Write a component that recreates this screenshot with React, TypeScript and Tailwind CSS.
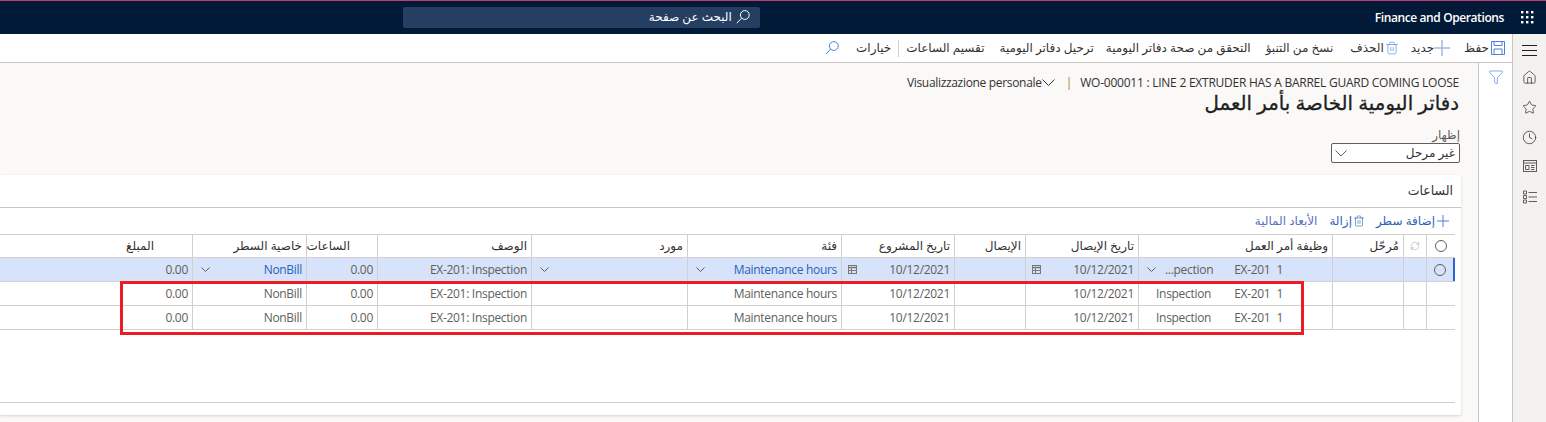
import React from 'react';
import { Home, Star, Clock, Trash2, Filter, RefreshCw } from 'lucide-react';

const columns = [
  { label: '', width: 'w-[29px]' },
  { label: '', width: 'w-[23px]' },
  { label: 'مُرحّل', width: 'w-[71px]' },
  { label: 'وظيفة أمر العمل', width: 'w-[194px]' },
  { label: 'تاريخ الإيصال', width: 'w-[113px]' },
  { label: 'الإيصال', width: 'w-[71px]' },
  { label: 'تاريخ المشروع', width: 'w-[113px]' },
  { label: 'فئة', width: 'w-[154px]' },
  { label: 'مورد', width: 'w-[156px]' },
  { label: 'الوصف', width: 'w-[154px]' },
  { label: 'الساعات', width: 'w-[71px]', pad: 'pr-[27px]' },
  { label: 'خاصية السطر', width: 'w-[114px]' },
  { label: 'المبلغ', width: 'w-[192px]', pad: 'pr-[38px]' },
];

const Cell: React.FC<{ width: string; children?: React.ReactNode; className?: string }> = ({ width, children, className = '' }) => (
  <div className={`${width} shrink-0 h-full border-l border-[#d2d0ce] flex items-center px-[4px] ${className}`}>{children}</div>
);

const Ltr: React.FC<{ children: React.ReactNode; className?: string }> = ({ children, className = '' }) => (
  <span dir="ltr" className={`tracking-[-0.3px] ${className}`}>{children}</span>
);

const Chev: React.FC<{ w: number; color?: string; className?: string }> = ({ w, color = '#605e5c', className = '' }) => (
  <svg width={w} height={w / 2 + 1} viewBox={`0 0 ${w} ${w / 2 + 1}`} fill="none" stroke={color} className={`shrink-0 ${className}`}>
    <path d={`M0.5 0.5L${w / 2} ${w / 2}L${w - 0.5} 0.5`} />
  </svg>
);

const Chevron = () => <Chev w={9} className="mr-auto ml-[4px]" />;

const DateIcon = () => (
  <svg width="9" height="9" viewBox="0 0 9 9" fill="none" stroke="#7a7876" className="mr-auto ml-[2px]">
    <rect x="0.5" y="0.5" width="8" height="8" />
    <path d="M0.5 2.5h8" strokeWidth="1.5" />
    <path d="M3.5 3v5M0.5 5.5h8" />
  </svg>
);

const Row: React.FC<{ selected?: boolean }> = ({ selected }) => {
  const link = selected ? 'text-[#2b5fb8]' : '';
  return (
    <div className={`flex h-[24px] border-b border-[#d2d0ce] text-[#605e5c] ${selected ? 'bg-[#d6e3fa]' : ''}`}>
      <Cell width="w-[29px]" className={`justify-center ${selected ? 'border-r-2 border-r-[#2b66d9]' : ''}`}>
        {selected && <span className="w-[12px] h-[12px] rounded-full border border-[#605e5c]" />}
      </Cell>
      <Cell width="w-[23px]" />
      <Cell width="w-[71px]" />
      <Cell width="w-[194px]" className="pr-[49px]">
        <Ltr>1</Ltr>
        <Ltr className="mr-[6px]">EX-201</Ltr>
        <Ltr className={selected ? 'mr-[21px]' : 'mr-[23px]'}>{selected ? '...pection' : 'Inspection'}</Ltr>
        {selected && <Chevron />}
      </Cell>
      <Cell width="w-[113px]">
        <Ltr>10/12/2021</Ltr>
        {selected && <DateIcon />}
      </Cell>
      <Cell width="w-[71px]" />
      <Cell width="w-[113px]">
        <Ltr>10/12/2021</Ltr>
        {selected && <DateIcon />}
      </Cell>
      <Cell width="w-[154px]">
        <Ltr className={link}>Maintenance hours</Ltr>
        {selected && <Chevron />}
      </Cell>
      <Cell width="w-[156px]">{selected && <Chevron />}</Cell>
      <Cell width="w-[154px]">
        <Ltr>EX-201: Inspection</Ltr>
      </Cell>
      <Cell width="w-[71px]">
        <Ltr>0.00</Ltr>
      </Cell>
      <Cell width="w-[114px]">
        <Ltr className={link}>NonBill</Ltr>
        {selected && <Chevron />}
      </Cell>
      <Cell width="w-[192px]" className="border-l-0">
        <Ltr>0.00</Ltr>
      </Cell>
    </div>
  );
};

const AppGrid = () => (
  <svg width="15" height="15" viewBox="0 0 15 15" fill="#fff">
    {[1, 6, 11].map((y) => [1, 6, 11].map((x) => <rect key={`${x}-${y}`} x={x} y={y} width="2.4" height="2.4" />))}
  </svg>
);

const SearchGlyph: React.FC<{ color: string; className?: string }> = ({ color, className = '' }) => (
  <svg width="14" height="14" viewBox="0 0 14 14" fill="none" stroke={color} className={`shrink-0 ${className}`}>
    <circle cx="8.8" cy="5" r="4.4" />
    <path d="M5.6 8.2L0.8 13.2" />
  </svg>
);

const MenuGlyph = () => (
  <svg width="15" height="11" viewBox="0 0 15 11" stroke="#201f1e">
    <path d="M0 0.5h15M0 5.5h15M0 10.5h15" />
  </svg>
);

const FormIcon = () => (
  <svg width="14" height="13" viewBox="0 0 14 13" fill="none" stroke="#605e5c">
    <rect x="0.5" y="0.5" width="13" height="11" />
    <path d="M0.5 3h13M2.5 5.5h3.5v4H2.5zM8 5.5h3.5M8 7.5h3.5M8 9.5h3.5" />
  </svg>
);

const ListIcon = () => (
  <svg width="14" height="14" viewBox="0 0 14 14" fill="none" stroke="#605e5c">
    <path d="M0.5 1h3v3h-3zM0.5 5.5h3v3h-3zM0.5 10h3v3h-3z" />
    <path d="M5.5 2.5h8.5M5.5 7h8.5M5.5 11.5h8.5" />
  </svg>
);

const SaveIcon = () => (
  <svg width="14" height="14" viewBox="0 0 14 14" fill="none" stroke="#4f7fe0">
    <path d="M0.5 0.5h13v13h-13z" />
    <path d="M3 0.5v4h8v-4M3 13.5v-5.5h8v5.5" />
  </svg>
);

const PlusIcon: React.FC<{ size: number; color: string; weight?: number }> = ({ size, color, weight = 1 }) => (
  <svg width={size} height={size} viewBox={`0 0 ${size} ${size}`} stroke={color} strokeWidth={weight} className="shrink-0">
    <path d={`M${size / 2} 0v${size}M0 ${size / 2}h${size}`} />
  </svg>
);

const ToolText: React.FC<{ children: React.ReactNode; className?: string }> = ({ children, className = '' }) => (
  <span className={`text-[12px] text-[#323130] whitespace-nowrap ${className}`}>{children}</span>
);

export default function App() {
  return (
    <div dir="rtl" className="h-screen w-full overflow-hidden flex flex-col bg-[#faf9f8] font-['Open_Sans','DejaVu_Sans',sans-serif] text-[12px] text-[#323130]">
      <header className="h-[34px] shrink-0 bg-[#001a38] border-t border-[#c23b72] flex items-center pr-[11px] text-white">
        <AppGrid />
        <span dir="ltr" className="mr-[16px] text-[12px] font-semibold tracking-[-0.4px] whitespace-nowrap">Finance and Operations</span>
        <div className="mr-[615px] w-[357px] h-[21px] mt-[-1px] rounded-[2px] bg-[#253f63] flex items-center pr-[10px] gap-[4px]">
          <SearchGlyph color="#ffffff" />
          <span className="text-[12px] text-white">البحث عن صفحة</span>
        </div>
      </header>

      <div className="flex flex-1 min-h-0">
        <nav className="w-[34px] shrink-0 bg-[#f3f2f1] border-l border-[#c8c6c4] flex flex-col items-center pt-[11px] gap-[15px] text-[#323130]">
          <div className="h-[13px]">
            <MenuGlyph />
          </div>
          <Home size={15} strokeWidth={1.2} className="mt-[-3px]" />
          <Star size={15} strokeWidth={1.2} />
          <Clock size={15} strokeWidth={1.2} />
          <FormIcon />
          <div className="mt-[2px]">
            <ListIcon />
          </div>
        </nav>

        <div className="flex-1 min-w-0 flex flex-col">
          <div className="h-[29px] shrink-0 bg-white border-b border-[#c8c6c4] flex items-center pr-[7px]">
            <SaveIcon />
            <ToolText className="mr-[2px]">حفظ</ToolText>
            <div className="mr-[14px]">
              <PlusIcon size={16} color="#a9b8ee" weight={1.5} />
            </div>
            <ToolText>جديد</ToolText>
            <Trash2 size={14} strokeWidth={1.1} className="mr-[12px] text-[#4f7fe0]" />
            <ToolText className="mr-[1px]">الحذف</ToolText>
            <ToolText className="mr-[17px]">نسخ من التنبؤ</ToolText>
            <ToolText className="mr-[15px]">التحقق من صحة دفاتر اليومية</ToolText>
            <ToolText className="mr-[12px]">ترحيل دفاتر اليومية</ToolText>
            <ToolText className="mr-[15px]">تقسيم الساعات</ToolText>
            <span className="w-px h-[17px] bg-[#d2d0ce] mx-[7px]" />
            <ToolText>خيارات</ToolText>
            <SearchGlyph color="#4f7fe0" className="mr-[17px]" />
          </div>

          <div className="flex flex-1 min-h-0">
            <aside className="w-[34px] shrink-0 bg-white border-l border-[#c8c6c4] flex justify-center pt-[6px]">
              <Filter size={16} strokeWidth={1} className="text-[#4f7fe0]" />
            </aside>

            <main className="flex-1 min-w-0 pr-[17px] pt-[13px] overflow-hidden">
              <div className="flex items-center h-[14px] mr-[2px] text-[12px] text-[#323130] whitespace-nowrap">
                <span dir="ltr" className="tracking-[-0.24px]">WO-000011 : LINE 2 EXTRUDER HAS A BARREL GUARD COMING LOOSE</span>
                <span className="mr-[8px] ml-[11px] text-[#b07a20]">|</span>
                <Chev w={13} color="#323130" />
                <span dir="ltr" className="tracking-[-0.32px]">Visualizzazione personale</span>
              </div>
              <h1 className="text-[19.8px] leading-[27px] mr-[2px] text-[#201f1e] mt-[-1px] [-webkit-text-stroke:0.3px_#201f1e]">دفاتر اليومية الخاصة بأمر العمل</h1>

              <label className="block mt-[12px] leading-[14px] mr-[1px] text-[12px] text-[#605e5c]">إظهار</label>
              <div className="w-[129px] h-[20px] mt-[1px] mr-[1px] bg-white border border-[#605e5c] rounded-[2px] flex items-center pr-[4px] pl-[3px]">
                <span className="text-[12px] text-[#323130]">غير مرحل</span>
                <Chev w={12} className="mr-auto" />
              </div>

              <section className="relative mt-[12px] h-[240px] bg-white rounded-[2px] shadow-[0_1px_3px_rgba(0,0,0,0.15)] pr-[6px]">
                <div className="h-[33px] pt-[7px] border-b border-[#c8c6c4] mr-[-6px] pr-[8px] text-[12.5px] text-[#323130]">الساعات</div>

                <div className="h-[26px] flex items-center pr-[6px] text-[12px] text-[#2b5fb8]">
                  <PlusIcon size={12} color="#4f7fe0" />
                  <span className="mr-[2px]">إضافة سطر</span>
                  <Trash2 size={12} strokeWidth={1.2} className="mr-[11px]" />
                  <span className="mr-[1px]">إزالة</span>
                  <span className="mr-[12px] text-[#5a6fc0]">الأبعاد المالية</span>
                </div>

                <div className="h-[169px] border-y border-[#d2d0ce] overflow-hidden">
                  <div className="flex h-[23px] border-b border-[#d2d0ce] text-[#323130]">
                    {columns.map((col, i) => (
                      <Cell key={i} width={col.width} className={`${col.pad ?? ''} ${i === 0 ? 'justify-center' : ''} ${i === 12 ? 'border-l-0' : ''}`}>
                        {i === 0 && <span className="w-[12px] h-[12px] rounded-full border border-[#605e5c]" />}
                        {i === 1 && <RefreshCw size={10} strokeWidth={1} className="mx-auto text-[#8a8886]" />}
                        {col.label}
                      </Cell>
                    ))}
                  </div>
                  <Row selected />
                  <Row />
                  <Row />
                </div>

                {/* red highlight drawn over the two copied rows */}
                <div className="absolute top-[106px] right-[157px] w-[1184px] h-[54px] border-[3px] border-[#ec1c24] pointer-events-none" />
              </section>
            </main>
          </div>
        </div>
      </div>
    </div>
  );
}
